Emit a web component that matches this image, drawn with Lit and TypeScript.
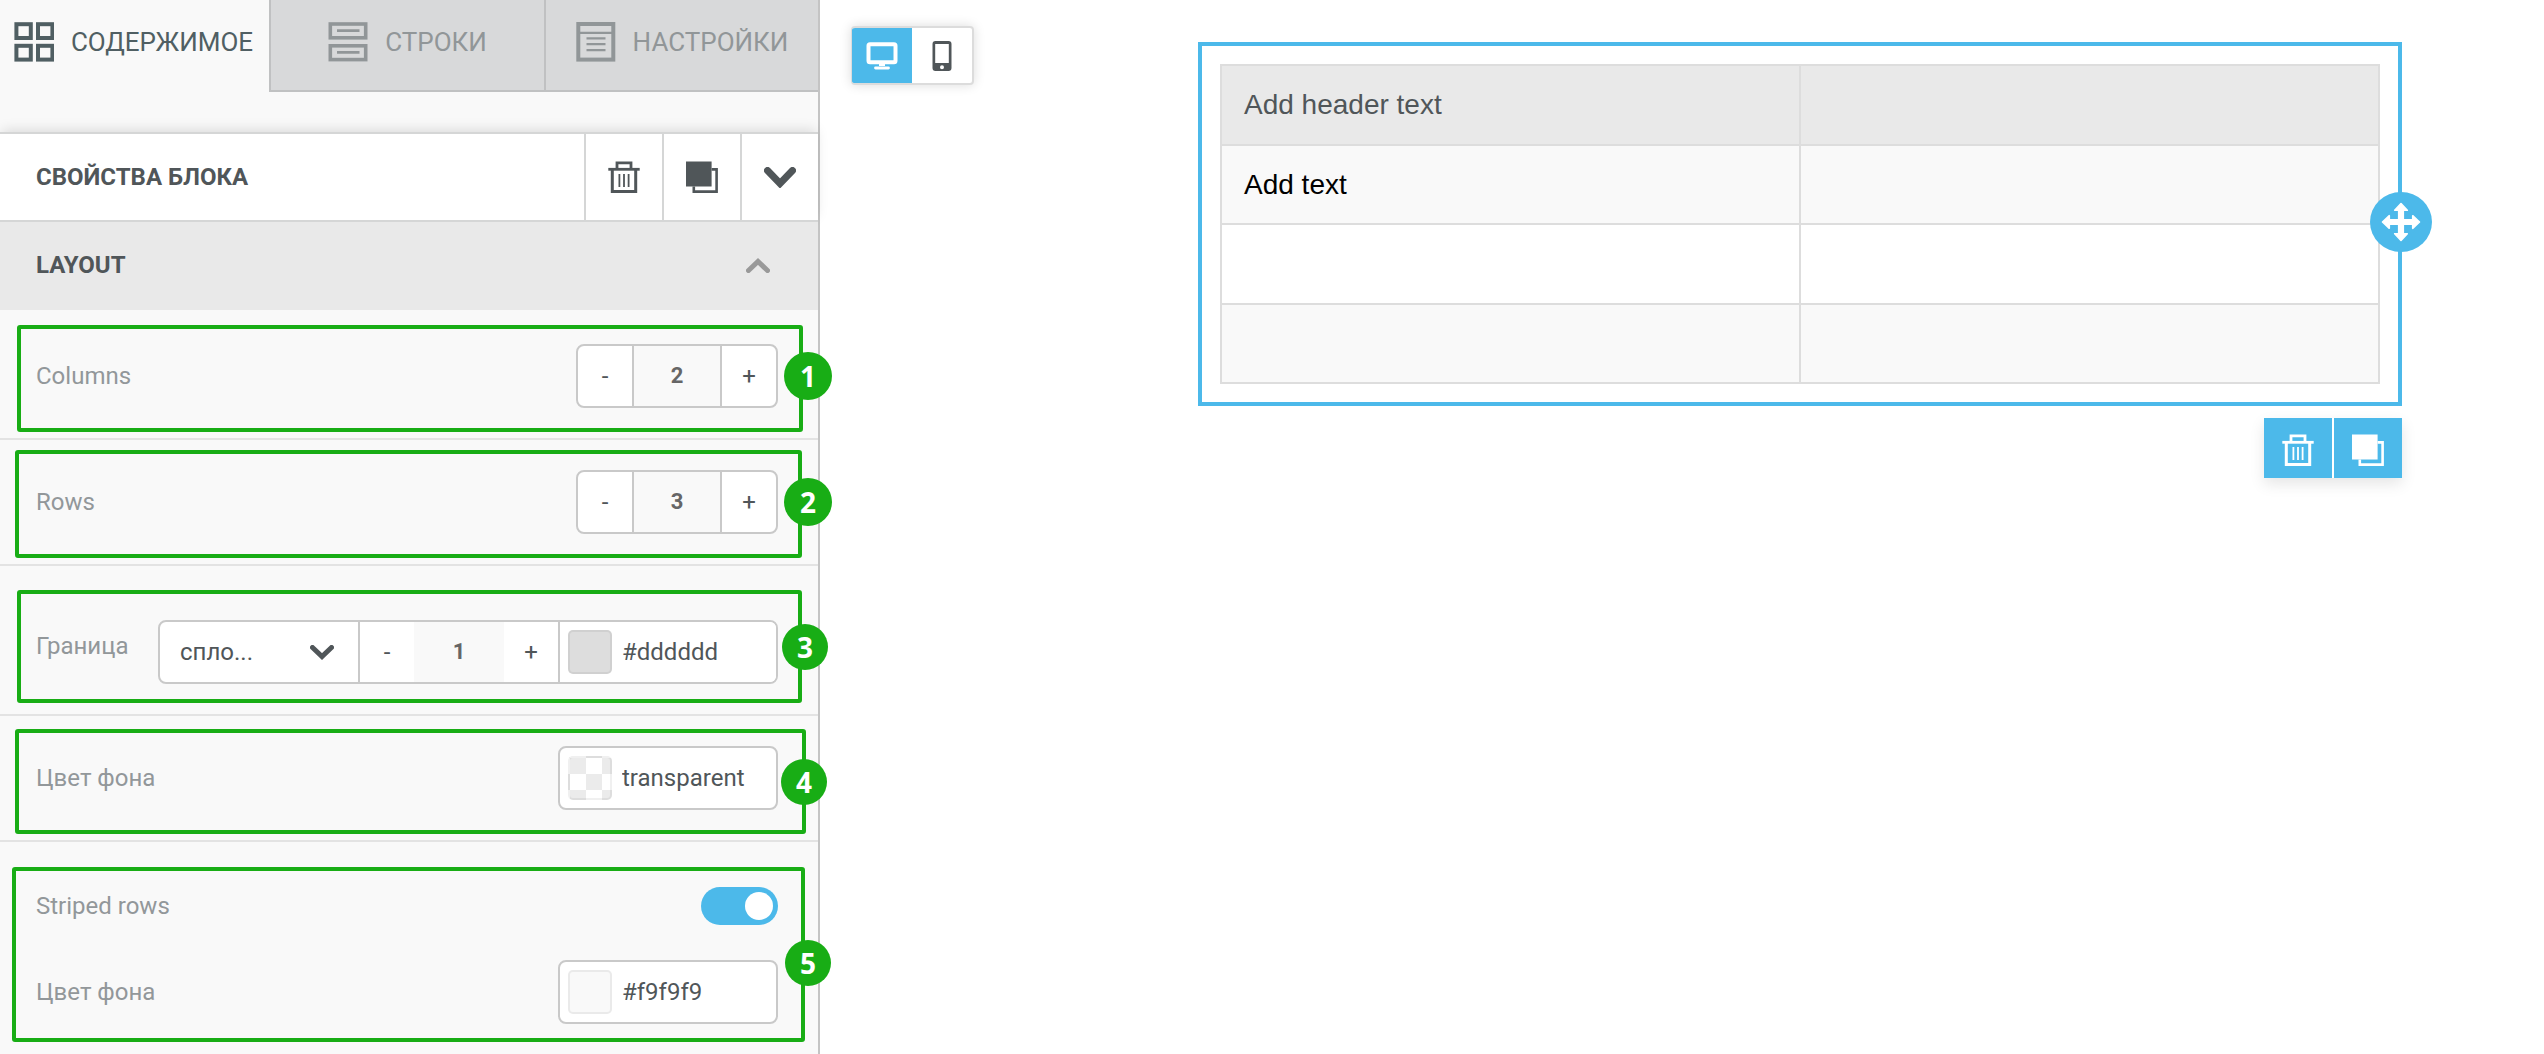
import { LitElement, html, css, svg, nothing } from "lit";
import { customElement, property, state } from "lit/decorators.js";
import { classMap } from "lit/directives/class-map.js";

const trashIcon = (size: number) => html`
  <svg class="icon" width=${size} height=${size} viewBox="0 0 32 32" fill="none" stroke="currentColor" aria-hidden="true">
    <path d="M9 7.5V1.8H23V7.5" stroke-width="2.8" />
    <path d="M0.3 8.3H31.7" stroke-width="2.8" />
    <path d="M4.3 8.3V30.6H27.7V8.3" stroke-width="3" />
    <path d="M11.4 13V26M16 13V26M20.6 13V26" stroke-width="1.8" />
  </svg>
`;

const copyIcon = (size: number) => html`
  <svg class="icon" width=${size} height=${size} viewBox="0 0 32 32" fill="none" aria-hidden="true">
    <rect x="0" y="0.5" width="25.6" height="25" fill="currentColor" />
    <path d="M25.6 8.4H30.6V30.6H7.8V25.5" stroke="currentColor" stroke-width="2.6" />
  </svg>
`;

const chevron = (width: number, height: number, stroke: number, up = false) => {
  const inset = stroke / 2;
  const near = up ? height - inset : inset;
  const far = up ? inset + 1 : height - inset - 1;
  return html`
    <svg class="icon" width=${width} height=${height} viewBox="0 0 ${width} ${height}" fill="none" aria-hidden="true">
      <path
        d="M${inset} ${near}L${width / 2} ${far}L${width - inset} ${near}"
        stroke="currentColor"
        stroke-width=${stroke}
        stroke-linecap="round"
      />
    </svg>
  `;
};

const tabShapes = {
  content: svg`
    <g stroke-width="4">
      <rect x="2.4" y="2.2" width="14.4" height="13.8" />
      <rect x="24" y="2.2" width="14.4" height="13.8" />
      <rect x="2.4" y="23.8" width="14.4" height="13.8" />
      <rect x="24" y="23.8" width="14.4" height="13.8" />
    </g>`,
  rows: svg`
    <g stroke-width="3.6">
      <rect x="2.3" y="2" width="35.4" height="13.8" />
      <rect x="2.3" y="23.8" width="35.4" height="13.8" />
    </g>
    <path d="M9 8.6H31.5M9 30.4H31.5" stroke-width="2.6" />`,
  settings: svg`
    <rect x="2.3" y="2" width="35" height="35.6" stroke-width="4" />
    <path d="M2.3 10.8H37.3" stroke-width="2.2" />
    <path d="M10.5 16.4H29.5M10.5 22.2H29.5M10.5 28.2H29.5" stroke-width="2.2" />`,
};

const controlStyles = css`
  * {
    box-sizing: border-box;
  }
  button,
  input,
  select {
    font: inherit;
    color: inherit;
    margin: 0;
    padding: 0;
    border: 0;
    border-radius: 0;
    background: none;
    appearance: none;
    outline-offset: 2px;
  }
  button,
  select {
    cursor: pointer;
  }
  .icon {
    display: block;
    flex: none;
  }
`;

@customElement("number-stepper")
class NumberStepper extends LitElement {
  static styles = [
    controlStyles,
    css`
      :host {
        display: flex;
        align-items: stretch;
        height: 64px;
        border: 2px solid #c9c9c9;
        border-radius: 8px;
        overflow: hidden;
        background: #fff;
        color: #505659;
        font-size: 24px;
      }
      :host([plain]) {
        height: auto;
        border: 0;
        border-radius: 0;
      }
      .step {
        width: 54px;
        text-align: center;
      }
      .value {
        width: 90px;
        text-align: center;
        font-size: 22px;
        font-weight: 700;
        color: #666;
        background: #f9f9f9;
      }
      .ruled {
        border: solid #c9c9c9;
        border-width: 0 2px;
      }
    `,
  ];

  @property() label = "";
  @property({ type: Number }) value = 0;
  @property({ type: Boolean, reflect: true }) plain = false;

  private bump(by: number) {
    this.value = Math.max(0, this.value + by);
  }

  render() {
    return html`
      <button class="step" type="button" aria-label="${this.label} −1" @click=${() => this.bump(-1)}>-</button>
      <input
        class=${classMap({ value: true, ruled: !this.plain })}
        type="text"
        inputmode="numeric"
        aria-label=${this.label}
        .value=${String(this.value)}
      />
      <button class="step" type="button" aria-label="${this.label} +1" @click=${() => this.bump(1)}>+</button>
    `;
  }
}

@customElement("color-field")
class ColorField extends LitElement {
  static styles = [
    controlStyles,
    css`
      :host {
        display: flex;
        align-items: center;
        gap: 10px;
        width: 220px;
        height: 64px;
        padding: 0 8px;
        border: 2px solid #c9c9c9;
        border-radius: 8px;
        background: #fff;
        color: #505659;
        font-size: 24px;
      }
      :host([plain]) {
        height: auto;
        border: 0;
        border-radius: 0;
      }
      .swatch {
        flex: none;
        width: 44px;
        height: 44px;
        border: 2px solid rgba(0, 0, 0, 0.06);
        border-radius: 5px;
      }
      .checker {
        background: conic-gradient(#fff 25%, #ebebeb 0 50%, #fff 0 75%, #ebebeb 0) 0 0 / 32px 32px;
      }
      .text {
        flex: 1;
        min-width: 0;
        height: 40px;
      }
    `,
  ];

  @property() label = "";
  @property() value = "";
  @property({ type: Boolean, reflect: true }) plain = false;

  render() {
    const clear = this.value === "transparent";
    return html`
      <button
        class=${classMap({ swatch: true, checker: clear })}
        type="button"
        aria-label=${this.label}
        style=${clear ? nothing : `background-color:${this.value}`}
      ></button>
      <input class="text" type="text" aria-label=${this.label} .value=${this.value} />
    `;
  }
}

@customElement("app-root")
class AppRoot extends LitElement {
  static styles = [
    controlStyles,
    css`
      :host {
        display: flex;
        align-items: stretch;
        min-height: 100vh;
        background: #fff;
        color: #505659;
        font-family: Roboto, "Liberation Sans", sans-serif;
        font-size: 24px;
        line-height: 32px;
      }

      .panel {
        position: relative;
        flex: none;
        width: 820px;
        border-right: 2px solid #c4c4c4;
        background: #f9f9f9;
      }
      .tabs {
        display: grid;
        grid-template-columns: 269px 275px 1fr;
        height: 92px;
        margin-bottom: 40px;
      }
      .tab {
        display: flex;
        align-items: center;
        justify-content: center;
        gap: 17px;
        padding-bottom: 6px;
        border: solid #c0c1c2;
        border-width: 0 0 2px 2px;
        background: #d8d9da;
        color: #919698;
        font-size: 26px;
      }
      .tab.active {
        padding-right: 2px;
        border-color: transparent;
        border-left-width: 0;
        background: none;
        color: #505f63;
      }

      .block-head {
        display: flex;
        align-items: stretch;
        height: 90px;
        border: solid #d5d6d6;
        border-width: 2px 0;
        background: #fff;
        box-shadow: 0 -4px 12px -2px rgba(0, 0, 0, 0.13);
      }
      .title {
        flex: 1;
        align-self: center;
        margin: 0;
        padding-left: 36px;
        font-size: 24px;
        font-weight: 700;
      }
      .tool {
        display: grid;
        place-items: center;
        width: 78px;
        border-left: 2px solid #d5d6d6;
      }

      .section-head {
        position: relative;
        display: flex;
        align-items: center;
        justify-content: space-between;
        width: 100%;
        height: 88px;
        padding: 0 48px 2px 36px;
        background: #e9e9e9;
        font-weight: 700;
      }
      .section-head .icon {
        color: #999;
      }

      .settings {
        padding-top: 4px;
      }
      .row {
        display: flex;
        align-items: center;
        justify-content: space-between;
        padding: 30px 40px 30px 36px;
        border-bottom: 2px solid #e3e3e3;
      }
      .row.border-row {
        padding-top: 54px;
      }
      .row.striped {
        flex-wrap: wrap;
        row-gap: 22px;
        padding-top: 32px;
        border-bottom: 0;
      }
      .pair {
        display: flex;
        align-items: center;
        justify-content: space-between;
        width: 100%;
        height: 64px;
      }
      .label {
        color: #92979a;
      }
      .border-row .label {
        padding-bottom: 12px;
      }

      .group {
        display: flex;
        align-items: stretch;
        height: 64px;
        border: 2px solid #c9c9c9;
        border-radius: 8px;
        overflow: hidden;
        background: #fff;
      }
      .group > number-stepper {
        border-left: 2px solid #c9c9c9;
      }
      .group > color-field {
        width: 218px;
        border-left: 2px solid #c9c9c9;
      }
      .select {
        display: grid;
        align-items: center;
        width: 198px;
      }
      .select > * {
        grid-area: 1 / 1;
      }
      .select select {
        width: 100%;
        height: 100%;
        padding: 0 60px 0 20px;
      }
      .select .icon {
        justify-self: end;
        margin-right: 24px;
        pointer-events: none;
      }

      .switch {
        display: flex;
        align-items: center;
        width: 77px;
        height: 38px;
        padding: 5px;
        border-radius: 19px;
        background: #c9c9c9;
        cursor: pointer;
      }
      .switch::before {
        content: "";
        width: 28px;
        height: 28px;
        border-radius: 50%;
        background: #fff;
      }
      .switch:checked {
        justify-content: flex-end;
        background: #4cb9ea;
      }

      .mark {
        position: absolute;
        border: 4px solid #18ad15;
        border-radius: 3px;
        pointer-events: none;
      }
      .mark-1 {
        inset: 325px 15px auto 17px;
        height: 107px;
      }
      .mark-2 {
        inset: 450px 16px auto 15px;
        height: 108px;
      }
      .mark-3 {
        inset: 590px 16px auto 17px;
        height: 113px;
      }
      .mark-4 {
        inset: 729px 12px auto 15px;
        height: 105px;
      }
      .mark-5 {
        inset: 867px 13px auto 12px;
        height: 175px;
      }
      .badge {
        position: absolute;
        display: grid;
        place-items: center;
        width: 46px;
        height: 46px;
        border-radius: 50%;
        background: #18ad15;
        color: #fff;
        font-family: "Noto Sans", "Open Sans", sans-serif;
        font-size: 28px;
        font-weight: 700;
      }
      .badge-1 {
        top: 352px;
        left: 784px;
        width: 48px;
        height: 48px;
      }
      .badge-2 {
        top: 478px;
        left: 784px;
        width: 48px;
        height: 48px;
      }
      .badge-3 {
        top: 624px;
        left: 782px;
      }
      .badge-4 {
        top: 759px;
        left: 781px;
      }
      .badge-5 {
        top: 940px;
        left: 785px;
      }

      .stage {
        display: flex;
        flex: 1;
        align-items: flex-start;
        justify-content: space-between;
        gap: 32px;
        min-width: 0;
        padding: 26px 142px 26px 31px;
      }
      .devices {
        display: flex;
        flex: none;
        border: 2px solid #dcdcdc;
        border-left-width: 1px;
        border-radius: 4px;
        overflow: hidden;
        background: #fff;
        box-shadow: 0 0 12px rgba(0, 0, 0, 0.14);
      }
      .device {
        display: grid;
        place-items: center;
        width: 60px;
        height: 55px;
      }
      .device.active {
        background: #4cb9ea;
        color: #fff;
      }

      .block {
        flex: 0 1 1204px;
        min-width: 0;
        margin-top: 16px;
      }
      .frame {
        position: relative;
        padding: 18px;
        border: 4px solid #4cb9ea;
      }
      .table {
        width: 100%;
        height: 320px;
        border-collapse: collapse;
        table-layout: fixed;
        font-family: "Liberation Sans", Arial, sans-serif;
        font-size: 28px;
        color: #000;
      }
      .table th,
      .table td {
        height: 79px;
        padding: 0 22px;
        border: 2px solid #ddd;
        text-align: left;
        font-weight: 400;
      }
      .table th {
        height: 80px;
        background: #e9e9e9;
        color: #505659;
      }
      .table tbody tr:nth-child(odd) {
        background: #f9f9f9;
      }
      .handle {
        position: absolute;
        top: 50%;
        right: -34px;
        display: grid;
        place-items: center;
        width: 62px;
        height: 60px;
        margin-top: -32px;
        border-radius: 50%;
        background: #4cb9ea;
        color: #fff;
        cursor: move;
      }
      .actions {
        display: flex;
        gap: 2px;
        width: fit-content;
        margin: 12px 0 0 auto;
        background: #fff;
        box-shadow: 0 6px 14px rgba(0, 0, 0, 0.1);
      }
      .action {
        display: grid;
        place-items: center;
        width: 68px;
        height: 60px;
        padding-top: 4px;
        background: #4cb9ea;
        color: #fff;
      }
    `,
  ];

  @state() private activeTab = "content";
  @state() private device = "desktop";

  private tab(id: keyof typeof tabShapes, text: string) {
    return html`
      <button
        class=${classMap({ tab: true, active: this.activeTab === id })}
        type="button"
        role="tab"
        aria-selected=${this.activeTab === id}
        @click=${() => (this.activeTab = id)}
      >
        <svg class="icon" width="40" height="40" viewBox="0 0 40 40" fill="none" stroke="currentColor" aria-hidden="true">
          ${tabShapes[id]}
        </svg>
        <span>${text}</span>
      </button>
    `;
  }

  private renderPanel() {
    return html`
      <aside class="panel">
        <div class="tabs" role="tablist">
          ${this.tab("content", "СОДЕРЖИМОЕ")} ${this.tab("rows", "СТРОКИ")} ${this.tab("settings", "НАСТРОЙКИ")}
        </div>
        <header class="block-head">
          <h2 class="title">СВОЙСТВА БЛОКА</h2>
          <button class="tool" type="button" aria-label="Удалить">${trashIcon(32)}</button>
          <button class="tool" type="button" aria-label="Дублировать">${copyIcon(32)}</button>
          <button class="tool" type="button" aria-label="Свернуть">${chevron(32, 21, 7)}</button>
        </header>
        <button class="section-head" type="button" aria-expanded="true">
          <span>LAYOUT</span>
          ${chevron(24, 15, 5, true)}
        </button>
        <div class="settings">
          <div class="row">
            <span class="label">Columns</span>
            <number-stepper label="Columns" .value=${2}></number-stepper>
          </div>
          <div class="row">
            <span class="label">Rows</span>
            <number-stepper label="Rows" .value=${3}></number-stepper>
          </div>
          <div class="row border-row">
            <label class="label" for="border-style">Граница</label>
            <div class="group">
              <div class="select">
                <select id="border-style">
                  <option>спло...</option>
                </select>
                ${chevron(24, 15, 5)}
              </div>
              <number-stepper plain label="Граница" .value=${1}></number-stepper>
              <color-field plain label="Граница" value="#dddddd"></color-field>
            </div>
          </div>
          <div class="row">
            <span class="label">Цвет фона</span>
            <color-field label="Цвет фона" value="transparent"></color-field>
          </div>
          <div class="row striped">
            <div class="pair">
              <label class="label" for="striped">Striped rows</label>
              <input id="striped" class="switch" type="checkbox" role="switch" checked />
            </div>
            <div class="pair">
              <span class="label">Цвет фона</span>
              <color-field label="Цвет фона" value="#f9f9f9"></color-field>
            </div>
          </div>
        </div>
        ${[1, 2, 3, 4, 5].map(
          (n) => html`
            <div class="mark mark-${n}"></div>
            <span class="badge badge-${n}">${n}</span>
          `,
        )}
      </aside>
    `;
  }

  private renderStage() {
    return html`
      <main class="stage">
        <div class="devices">
          <button
            class=${classMap({ device: true, active: this.device === "desktop" })}
            type="button"
            aria-label="Desktop"
            @click=${() => (this.device = "desktop")}
          >
            <svg class="icon" width="32" height="28" viewBox="0 0 32 28" aria-hidden="true">
              <rect x="2.5" y="2.3" width="27" height="18" rx="1.5" fill="none" stroke="currentColor" stroke-width="4" />
              <path d="M13 21H19V24H13Z" fill="currentColor" />
              <path d="M9.5 26H22.5" stroke="currentColor" stroke-width="2.8" stroke-linecap="round" />
            </svg>
          </button>
          <button
            class=${classMap({ device: true, active: this.device === "mobile" })}
            type="button"
            aria-label="Mobile"
            @click=${() => (this.device = "mobile")}
          >
            <svg class="icon" width="20" height="30" viewBox="0 0 20 30" aria-hidden="true">
              <path
                fill="currentColor"
                fill-rule="evenodd"
                d="M3.5 0H16.5A3 3 0 0 1 19.5 3V27A3 3 0 0 1 16.5 30H3.5A3 3 0 0 1 .5 27V3A3 3 0 0 1 3.5 0ZM3.2 3V22H16.8V3ZM10 24.2A2 2 0 1 0 10 28.2A2 2 0 1 0 10 24.2Z"
              />
            </svg>
          </button>
        </div>
        <section class="block">
          <div class="frame">
            <table class="table">
              <thead>
                <tr>
                  <th scope="col">Add header text</th>
                  <th scope="col"></th>
                </tr>
              </thead>
              <tbody>
                <tr>
                  <td>Add text</td>
                  <td></td>
                </tr>
                <tr>
                  <td></td>
                  <td></td>
                </tr>
                <tr>
                  <td></td>
                  <td></td>
                </tr>
              </tbody>
            </table>
            <button class="handle" type="button" aria-label="Переместить">
              <svg class="icon" width="40" height="40" viewBox="0 0 40 40" aria-hidden="true">
                <path
                  fill="currentColor"
                  stroke="currentColor"
                  stroke-width="1.6"
                  stroke-linejoin="round"
                  d="M20 1.5L26.3 8.3H22.3V17.7H31.7V13.7L38.5 20L31.7 26.3V22.3H22.3V31.7H26.3L20 38.5L13.7 31.7H17.7V22.3H8.3V26.3L1.5 20L8.3 13.7V17.7H17.7V8.3H13.7Z"
                />
              </svg>
            </button>
          </div>
          <div class="actions">
            <button class="action" type="button" aria-label="Удалить">${trashIcon(32)}</button>
            <button class="action" type="button" aria-label="Дублировать">${copyIcon(32)}</button>
          </div>
        </section>
      </main>
    `;
  }

  render() {
    return html`${this.renderPanel()}${this.renderStage()}`;
  }
}
